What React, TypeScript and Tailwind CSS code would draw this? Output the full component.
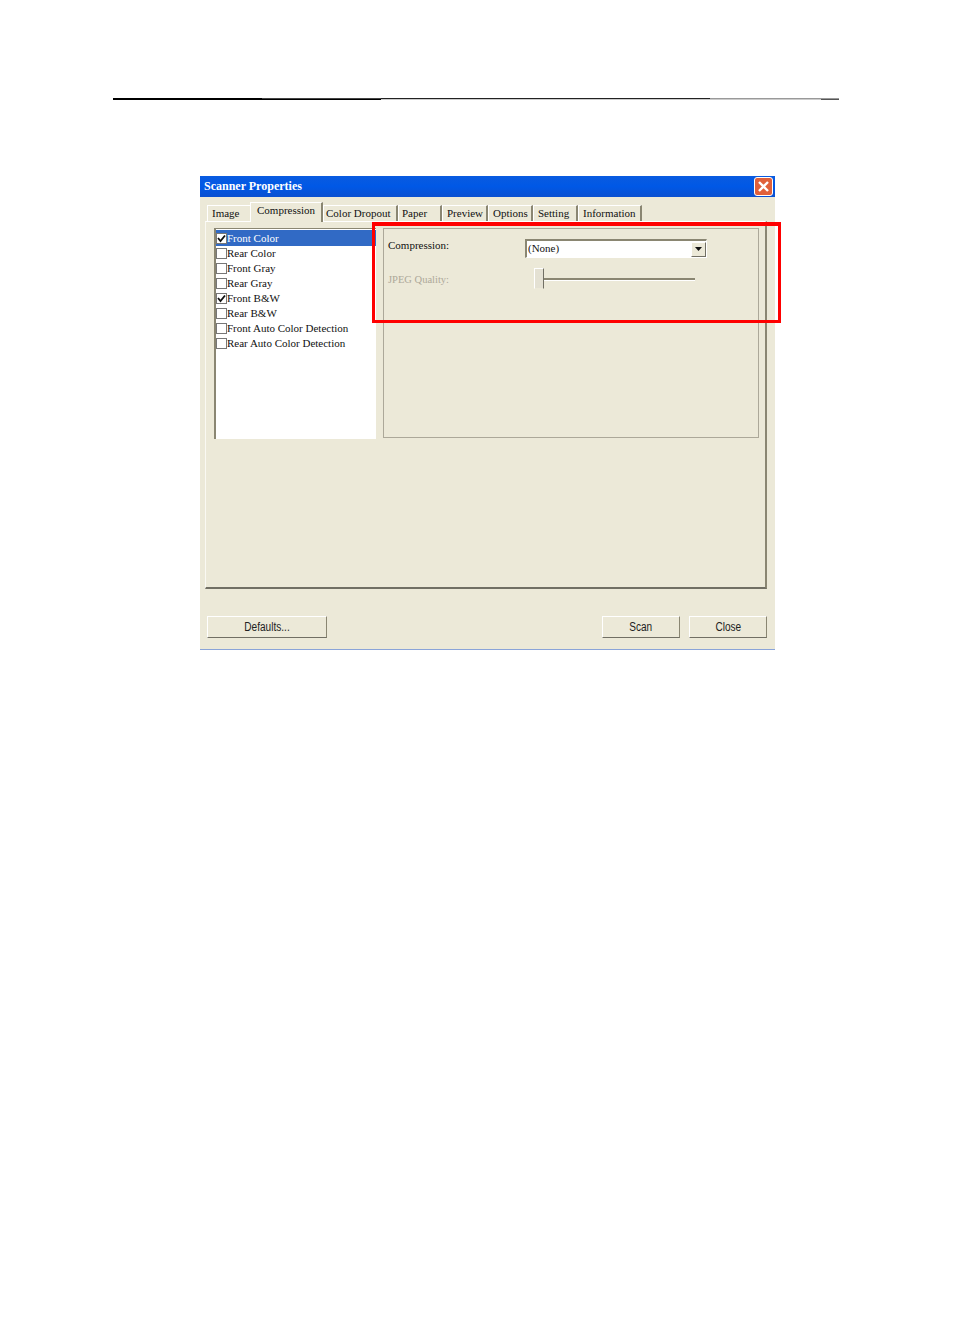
import React from "react";

const tabs = [
  { t: "Image", w: "w-[43px]", active: false, pad: "pl-[4px]", noR: true },
  { t: "Compression", w: "w-[73px]", active: true, pad: "pl-[6px]" },
  { t: "Color Dropout", w: "w-[75px]", active: false, pad: "pl-[2px]" },
  { t: "Paper", w: "w-[44px]", active: false, pad: "pl-[3px]" },
  { t: "Preview", w: "w-[46px]", active: false, pad: "pl-[4px]" },
  { t: "Options", w: "w-[45px]", active: false, pad: "pl-[4px]" },
  { t: "Setting", w: "w-[45px]", active: false, pad: "pl-[4px]" },
  { t: "Information", w: "w-[64px]", active: false, pad: "pl-[4px]" },
];

const items = [
  { t: "Front Color", c: true, s: true },
  { t: "Rear Color" },
  { t: "Front Gray" },
  { t: "Rear Gray" },
  { t: "Front B&W", c: true },
  { t: "Rear B&W" },
  { t: "Front Auto Color Detection" },
  { t: "Rear Auto Color Detection" },
];

function Btn({ label, w }: { label: string; w: string }) {
  return (
    <div
      className={`${w} h-[22px] flex items-center justify-center border border-t-white border-l-white border-r-[#8a8672] border-b-[#716f64] bg-[#ece9d8] text-[12px] text-[#222] font-['Liberation_Sans',sans-serif]`}
    >
      <span className="inline-block scale-x-[0.84]">{label}</span>
    </div>
  );
}

export default function App() {
  return (
    <div className="relative w-[954px] h-[1336px] bg-white overflow-hidden font-['Liberation_Serif',serif] text-[11px] leading-none text-[#111]">
      <div className="pt-[98px] pl-[113px]">
        <div className="w-[726px] h-[2px] flex flex-col">
          <div className="h-[1px] flex">
            <div className="w-[149px] bg-black" />
            <div className="w-[119px] bg-[#444]" />
            <div className="w-[329px] bg-[#222]" />
            <div className="w-[129px] bg-[#999]" />
          </div>
          <div className="h-[1px] flex">
            <div className="w-[268px] bg-black" />
            <div className="w-[440px] bg-[#ccc]" />
            <div className="w-[18px] bg-[#555]" />
          </div>
        </div>
      </div>

      <div className="ml-[200px] mt-[76px] w-[575px] h-[474px] bg-[#ece9d8] border-b border-b-[#8aa4d8] flex flex-col">
        <div className="h-[21px] shrink-0 bg-gradient-to-b from-[#0a5be0] via-[#0058e6] to-[#0a50d0] flex items-center justify-between pl-[4px] pr-[2px]">
          <span className="text-white font-bold text-[12px] mt-[-2px]">Scanner Properties</span>
          <div className="w-[19px] h-[19px] rounded-[3px] border border-white bg-[#e0603a] flex items-center justify-center">
            <svg width="13" height="13" viewBox="0 0 13 13">
              <path d="M2 2 L11 11 M11 2 L2 11" stroke="white" strokeWidth="2.4" fill="none" />
            </svg>
          </div>
        </div>

        <div className="flex items-end h-[25px] pl-[7px] shrink-0 mt-[-1px]">
          {tabs.map((x) =>
            x.active ? (
              <div
                key={x.t}
                className={`${x.w} h-[20px] relative z-10 mb-[-1px] bg-[#ece9d8] border-t border-t-white border-l border-l-white border-r-2 border-r-[#8a8672] ${x.pad} pt-[2px] whitespace-nowrap`}
              >
                {x.t}
              </div>
            ) : (
              <div
                key={x.t}
                className={`${x.w} h-[16px] bg-[#ece9d8] border-t border-t-white border-l border-l-white ${x.noR ? "" : "border-r-2 border-r-[#8a8672]"} ${x.pad} pt-[2px] whitespace-nowrap`}
              >
                {x.t}
              </div>
            )
          )}
        </div>

        <div className="ml-[5px] w-[562px] h-[368px] border border-t-white border-l-[#faf9f3] border-r-2 border-r-[#8a8672] border-b-2 border-b-[#716f64] pt-[6px] pl-[8px] flex items-start gap-[7px]">
          <div className="w-[162px] h-[211px] bg-white border-l-2 border-t border-l-[#8a8672] border-t-[#8a8672] pt-[1px]">
            {items.map((i) => (
              <div
                key={i.t}
                className={`flex items-center whitespace-nowrap ${i.s ? "bg-[#316ac5] text-white h-[16px] mb-[-0.5px]" : "h-[15.15px]"}`}
              >
                <span className="w-[11px] h-[11px] border border-[#777] bg-white flex items-center justify-center shrink-0">
                  {i.c && (
                    <svg width="9" height="9" viewBox="0 0 9 9">
                      <path d="M1 4 L3.5 7 L8 1.5" stroke="#111" strokeWidth="1.8" fill="none" />
                    </svg>
                  )}
                </span>
                <span>{i.t}</span>
              </div>
            ))}
          </div>

          <div className="w-[376px] h-[210px] border border-[#aca899] pl-[4px] pt-[11px]">
            <div className="flex items-start">
              <span className="w-[137px]">Compression:</span>
              <div className="w-[182px] h-[19px] mt-[-1px] border border-t-2 border-l-2 border-t-[#8a8672] border-l-[#8a8672] border-r-white border-b-white bg-white flex items-center justify-between">
                <span className="pl-[1px] mt-[-2px]">(None)</span>
                <div className="w-[15px] h-[15px] bg-[#ece9d8] border border-t-white border-l-white border-r-[#716f64] border-b-[#716f64] flex items-center justify-center">
                  <svg width="7" height="4" viewBox="0 0 7 4">
                    <path d="M0 0 H7 L3.5 4 Z" fill="#111" />
                  </svg>
                </div>
              </div>
            </div>
            <div className="flex items-center mt-[10px]">
              <span className="w-[146px] text-[#aca899] text-[10.5px] mt-[3px]">JPEG Quality:</span>
              <div className="w-[10px] h-[21px] bg-[#e4e1d3] border border-t-white border-l-white border-r-[#716f64] border-b-[#ece9d8] shrink-0" />
              <div className="w-[151px] h-[3px] mt-[2px] bg-[#8a8672] border-b border-b-white" />
            </div>
          </div>
        </div>

        <div className="flex items-start mt-[27px] pl-[7px] pr-[8px]">
          <Btn label="Defaults..." w="w-[120px]" />
          <div className="flex-1" />
          <Btn label="Scan" w="w-[78px]" />
          <div className="w-[9px]" />
          <Btn label="Close" w="w-[78px]" />
        </div>
      </div>

      <div className="absolute left-[372px] top-[222px] w-[409px] h-[101px] border-[3px] border-t-4 border-[#ff0000]" />
    </div>
  );
}
